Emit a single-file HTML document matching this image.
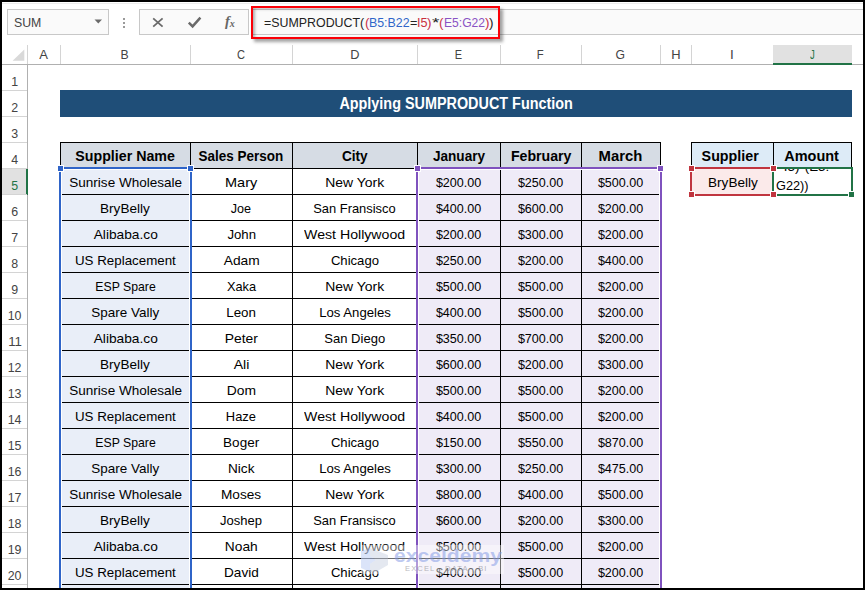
<!DOCTYPE html>
<html><head><meta charset="utf-8"><title>Excel</title>
<style>
html,body{margin:0;padding:0;}
html{width:865px;height:590px;overflow:hidden;}
body{width:865px;height:590px;position:relative;overflow:hidden;background:#fff;font-family:"Liberation Sans",sans-serif;}
.a{position:absolute;box-sizing:border-box;}
.t{position:absolute;white-space:nowrap;line-height:normal;display:block;}
</style></head><body>

<div class="a" style="left:2px;top:3px;width:861px;height:1px;background:#ececec;"></div>
<div class="a" style="left:7px;top:9px;width:102px;height:26px;border:1px solid #c8c8c8;background:#fafafa;"></div>
<span class="t" style="left:14.00px;top:16.00px;font-size:12.6px;font-weight:normal;color:#444;transform:scaleX(0.9780);transform-origin:left top;">SUM</span>
<svg class="a" style="left:94px;top:19px" width="9" height="6"><path d="M0.5 0.5 L8 0.5 L4.25 4.5 Z" fill="#6a6a6a"/></svg>
<div class="a" style="left:123px;top:18px;width:2px;height:2px;background:#9a9a9a;"></div>
<div class="a" style="left:123px;top:22px;width:2px;height:2px;background:#9a9a9a;"></div>
<div class="a" style="left:123px;top:26px;width:2px;height:2px;background:#9a9a9a;"></div>
<div class="a" style="left:139px;top:9px;width:110px;height:26px;border:1px solid #c8c8c8;background:#fafafa;"></div>
<svg class="a" style="left:151px;top:16px" width="14" height="14"><path d="M2.2 2.4 L11.6 10.6 M11.6 2.4 L2.2 10.6" stroke="#6a6a6a" stroke-width="1.8" fill="none"/></svg>
<svg class="a" style="left:187px;top:16px" width="16" height="14"><path d="M1.8 6.6 L5.6 10.4 L13.4 1.6" stroke="#6a6a6a" stroke-width="2.5" fill="none"/></svg>
<span class="t" style="left:225px;top:13px;font-family:'Liberation Serif',serif;font-style:italic;font-weight:bold;font-size:14.5px;color:#666;">f<span style="font-size:10px;position:relative;top:1px;">x</span></span>
<div class="a" style="left:252px;top:9px;width:611px;height:26px;border-top:1px solid #c8c8c8;border-bottom:1px solid #c8c8c8;background:#fafafa;"></div>
<div class="a" style="left:251px;top:6px;width:249px;height:32.5px;border:2.3px solid #fb0007;box-shadow:3px 3px 3px rgba(0,0,0,0.36), inset 2px 1px 3px rgba(0,0,0,0.3);"></div>
<span class="t" style="left:264.30px;top:15.00px;font-size:13px;font-weight:normal;color:#222;transform:scaleX(0.9535);transform-origin:left top;">=SUMPRODUCT(</span>
<span class="t" style="left:364.50px;top:15.00px;font-size:13px;font-weight:normal;color:#c9304a;transform:scaleX(1.0387);transform-origin:left top;">(</span>
<span class="t" style="left:368.99px;top:15.00px;font-size:13px;font-weight:normal;color:#2f66c9;transform:scaleX(0.9502);transform-origin:left top;">B5:B22</span>
<span class="t" style="left:409.51px;top:15.00px;font-size:13px;font-weight:normal;color:#222;transform:scaleX(0.9729);transform-origin:left top;">=</span>
<span class="t" style="left:416.90px;top:15.00px;font-size:13px;font-weight:normal;color:#c9303c;transform:scaleX(0.9724);transform-origin:left top;">I5</span>
<span class="t" style="left:427.44px;top:15.00px;font-size:13px;font-weight:normal;color:#c9304a;transform:scaleX(1.0387);transform-origin:left top;">)</span>
<span class="t" style="left:431.94px;top:15.00px;font-size:13px;font-weight:normal;color:#222;transform:scaleX(1.4600);transform-origin:left top;">*</span>
<span class="t" style="left:439.33px;top:15.00px;font-size:13px;font-weight:normal;color:#c9304a;transform:scaleX(1.0387);transform-origin:left top;">(</span>
<span class="t" style="left:443.82px;top:15.00px;font-size:13px;font-weight:normal;color:#8a52c4;transform:scaleX(0.9297);transform-origin:left top;">E5:G22</span>
<span class="t" style="left:484.81px;top:15.00px;font-size:13px;font-weight:normal;color:#c9304a;transform:scaleX(1.0387);transform-origin:left top;">)</span>
<span class="t" style="left:489.30px;top:15.00px;font-size:13px;font-weight:normal;color:#222;transform:scaleX(1.0387);transform-origin:left top;">)</span>
<div class="a" style="left:2px;top:64px;width:861px;height:1px;background:#b0b0b0;"></div>
<div class="a" style="left:27px;top:45px;width:1px;height:19px;background:#d4d4d4;"></div>
<div class="a" style="left:27px;top:64px;width:1px;height:526px;background:#b0b0b0;"></div>
<svg class="a" style="left:11px;top:48px" width="16" height="14"><path d="M13.3 1.5 L13.3 12.7 L1.6 12.7 Z" fill="#d9d9d9"/></svg>
<div class="a" style="left:60px;top:45px;width:1px;height:19px;background:#d4d4d4;"></div>
<span class="t" style="left:38.96px;top:47.00px;font-size:13.6px;font-weight:normal;color:#444;transform:scaleX(0.9568);transform-origin:center top;">A</span>
<div class="a" style="left:190px;top:45px;width:1px;height:19px;background:#d4d4d4;"></div>
<span class="t" style="left:120.46px;top:47.00px;font-size:13.6px;font-weight:normal;color:#444;transform:scaleX(0.8995);transform-origin:center top;">B</span>
<div class="a" style="left:292px;top:45px;width:1px;height:19px;background:#d4d4d4;"></div>
<span class="t" style="left:236.09px;top:47.00px;font-size:13.6px;font-weight:normal;color:#444;transform:scaleX(0.8143);transform-origin:center top;">C</span>
<div class="a" style="left:417px;top:45px;width:1px;height:19px;background:#d4d4d4;"></div>
<span class="t" style="left:349.59px;top:47.00px;font-size:13.6px;font-weight:normal;color:#444;transform:scaleX(0.9396);transform-origin:center top;">D</span>
<div class="a" style="left:500px;top:45px;width:1px;height:19px;background:#d4d4d4;"></div>
<span class="t" style="left:453.96px;top:47.00px;font-size:13.6px;font-weight:normal;color:#444;transform:scaleX(0.8074);transform-origin:center top;">E</span>
<div class="a" style="left:581px;top:45px;width:1px;height:19px;background:#d4d4d4;"></div>
<span class="t" style="left:536.35px;top:47.00px;font-size:13.6px;font-weight:normal;color:#444;transform:scaleX(0.8296);transform-origin:center top;">F</span>
<div class="a" style="left:660px;top:45px;width:1px;height:19px;background:#d4d4d4;"></div>
<span class="t" style="left:615.21px;top:47.00px;font-size:13.6px;font-weight:normal;color:#444;transform:scaleX(0.8945);transform-origin:center top;">G</span>
<div class="a" style="left:691px;top:45px;width:1px;height:19px;background:#d4d4d4;"></div>
<span class="t" style="left:670.59px;top:47.00px;font-size:13.6px;font-weight:normal;color:#444;transform:scaleX(0.9516);transform-origin:center top;">H</span>
<div class="a" style="left:773px;top:45px;width:1px;height:19px;background:#d4d4d4;"></div>
<span class="t" style="left:730.11px;top:47.00px;font-size:13.6px;font-weight:normal;color:#444;transform:scaleX(1.0002);transform-origin:center top;">I</span>
<div class="a" style="left:773px;top:45px;width:79px;height:19px;background:#e1e1e1;"></div>
<div class="a" style="left:773px;top:63px;width:79px;height:2px;background:#217346;"></div>
<span class="t" style="left:809.10px;top:47.00px;font-size:13.6px;font-weight:normal;color:#217346;transform:scaleX(0.7033);transform-origin:center top;">J</span>
<div class="a" style="left:2px;top:90px;width:25px;height:1px;background:#d4d4d4;"></div>
<span class="t" style="left:11.22px;top:74.00px;font-size:13.6px;font-weight:normal;color:#444;transform:scaleX(0.9102);transform-origin:center top;">1</span>
<div class="a" style="left:2px;top:116px;width:25px;height:1px;background:#d4d4d4;"></div>
<span class="t" style="left:11.22px;top:100.00px;font-size:13.6px;font-weight:normal;color:#444;transform:scaleX(0.9102);transform-origin:center top;">2</span>
<div class="a" style="left:2px;top:142px;width:25px;height:1px;background:#d4d4d4;"></div>
<span class="t" style="left:11.22px;top:126.00px;font-size:13.6px;font-weight:normal;color:#444;transform:scaleX(0.9102);transform-origin:center top;">3</span>
<div class="a" style="left:2px;top:168px;width:25px;height:1px;background:#d4d4d4;"></div>
<span class="t" style="left:11.22px;top:152.00px;font-size:13.6px;font-weight:normal;color:#444;transform:scaleX(0.9102);transform-origin:center top;">4</span>
<div class="a" style="left:2px;top:169px;width:25px;height:25px;background:#e1e1e1;"></div>
<div class="a" style="left:26px;top:169px;width:2px;height:26px;background:#217346;"></div>
<div class="a" style="left:2px;top:194px;width:25px;height:1px;background:#d4d4d4;"></div>
<span class="t" style="left:11.22px;top:178.00px;font-size:13.6px;font-weight:normal;color:#217346;transform:scaleX(0.9102);transform-origin:center top;">5</span>
<div class="a" style="left:2px;top:220px;width:25px;height:1px;background:#d4d4d4;"></div>
<span class="t" style="left:11.22px;top:204.00px;font-size:13.6px;font-weight:normal;color:#444;transform:scaleX(0.9102);transform-origin:center top;">6</span>
<div class="a" style="left:2px;top:246px;width:25px;height:1px;background:#d4d4d4;"></div>
<span class="t" style="left:11.22px;top:230.00px;font-size:13.6px;font-weight:normal;color:#444;transform:scaleX(0.9102);transform-origin:center top;">7</span>
<div class="a" style="left:2px;top:272px;width:25px;height:1px;background:#d4d4d4;"></div>
<span class="t" style="left:11.22px;top:256.00px;font-size:13.6px;font-weight:normal;color:#444;transform:scaleX(0.9102);transform-origin:center top;">8</span>
<div class="a" style="left:2px;top:298px;width:25px;height:1px;background:#d4d4d4;"></div>
<span class="t" style="left:11.22px;top:282.00px;font-size:13.6px;font-weight:normal;color:#444;transform:scaleX(0.9102);transform-origin:center top;">9</span>
<div class="a" style="left:2px;top:324px;width:25px;height:1px;background:#d4d4d4;"></div>
<span class="t" style="left:7.44px;top:308.00px;font-size:13.6px;font-weight:normal;color:#444;transform:scaleX(0.9102);transform-origin:center top;">10</span>
<div class="a" style="left:2px;top:350px;width:25px;height:1px;background:#d4d4d4;"></div>
<span class="t" style="left:7.94px;top:334.00px;font-size:13.6px;font-weight:normal;color:#444;transform:scaleX(0.9753);transform-origin:center top;">11</span>
<div class="a" style="left:2px;top:376px;width:25px;height:1px;background:#d4d4d4;"></div>
<span class="t" style="left:7.44px;top:360.00px;font-size:13.6px;font-weight:normal;color:#444;transform:scaleX(0.9102);transform-origin:center top;">12</span>
<div class="a" style="left:2px;top:402px;width:25px;height:1px;background:#d4d4d4;"></div>
<span class="t" style="left:7.44px;top:386.00px;font-size:13.6px;font-weight:normal;color:#444;transform:scaleX(0.9102);transform-origin:center top;">13</span>
<div class="a" style="left:2px;top:428px;width:25px;height:1px;background:#d4d4d4;"></div>
<span class="t" style="left:7.44px;top:412.00px;font-size:13.6px;font-weight:normal;color:#444;transform:scaleX(0.9102);transform-origin:center top;">14</span>
<div class="a" style="left:2px;top:454px;width:25px;height:1px;background:#d4d4d4;"></div>
<span class="t" style="left:7.44px;top:438.00px;font-size:13.6px;font-weight:normal;color:#444;transform:scaleX(0.9102);transform-origin:center top;">15</span>
<div class="a" style="left:2px;top:480px;width:25px;height:1px;background:#d4d4d4;"></div>
<span class="t" style="left:7.44px;top:464.00px;font-size:13.6px;font-weight:normal;color:#444;transform:scaleX(0.9102);transform-origin:center top;">16</span>
<div class="a" style="left:2px;top:506px;width:25px;height:1px;background:#d4d4d4;"></div>
<span class="t" style="left:7.44px;top:490.00px;font-size:13.6px;font-weight:normal;color:#444;transform:scaleX(0.9102);transform-origin:center top;">17</span>
<div class="a" style="left:2px;top:532px;width:25px;height:1px;background:#d4d4d4;"></div>
<span class="t" style="left:7.44px;top:516.00px;font-size:13.6px;font-weight:normal;color:#444;transform:scaleX(0.9102);transform-origin:center top;">18</span>
<div class="a" style="left:2px;top:558px;width:25px;height:1px;background:#d4d4d4;"></div>
<span class="t" style="left:7.44px;top:542.00px;font-size:13.6px;font-weight:normal;color:#444;transform:scaleX(0.9102);transform-origin:center top;">19</span>
<div class="a" style="left:2px;top:584px;width:25px;height:1px;background:#d4d4d4;"></div>
<span class="t" style="left:7.44px;top:568.00px;font-size:13.6px;font-weight:normal;color:#444;transform:scaleX(0.9102);transform-origin:center top;">20</span>
<div class="a" style="left:60px;top:90px;width:792px;height:27px;background:#1f4e78;"></div>
<span class="t" style="left:328.16px;top:95.00px;font-size:15.8px;font-weight:bold;color:#fff;transform:scaleX(0.9111);transform-origin:center top;">Applying SUMPRODUCT Function</span>
<div class="a" style="left:60px;top:142px;width:601px;height:27px;background:#d6dce4;"></div>
<div class="a" style="left:60px;top:169px;width:130px;height:419px;background:#e9eef8;"></div>
<div class="a" style="left:417px;top:169px;width:244px;height:419px;background:#efebf7;"></div>
<div class="a" style="left:60px;top:142px;width:601px;height:1px;background:#000;"></div>
<div class="a" style="left:60px;top:168px;width:601px;height:1px;background:#000;"></div>
<div class="a" style="left:60px;top:194px;width:601px;height:1px;background:#000;"></div>
<div class="a" style="left:60px;top:220px;width:601px;height:1px;background:#000;"></div>
<div class="a" style="left:60px;top:246px;width:601px;height:1px;background:#000;"></div>
<div class="a" style="left:60px;top:272px;width:601px;height:1px;background:#000;"></div>
<div class="a" style="left:60px;top:298px;width:601px;height:1px;background:#000;"></div>
<div class="a" style="left:60px;top:324px;width:601px;height:1px;background:#000;"></div>
<div class="a" style="left:60px;top:350px;width:601px;height:1px;background:#000;"></div>
<div class="a" style="left:60px;top:376px;width:601px;height:1px;background:#000;"></div>
<div class="a" style="left:60px;top:402px;width:601px;height:1px;background:#000;"></div>
<div class="a" style="left:60px;top:428px;width:601px;height:1px;background:#000;"></div>
<div class="a" style="left:60px;top:454px;width:601px;height:1px;background:#000;"></div>
<div class="a" style="left:60px;top:480px;width:601px;height:1px;background:#000;"></div>
<div class="a" style="left:60px;top:506px;width:601px;height:1px;background:#000;"></div>
<div class="a" style="left:60px;top:532px;width:601px;height:1px;background:#000;"></div>
<div class="a" style="left:60px;top:558px;width:601px;height:1px;background:#000;"></div>
<div class="a" style="left:60px;top:584px;width:601px;height:1px;background:#000;"></div>
<div class="a" style="left:60px;top:142px;width:1px;height:446px;background:#000;"></div>
<div class="a" style="left:190px;top:142px;width:1px;height:446px;background:#000;"></div>
<div class="a" style="left:292px;top:142px;width:1px;height:446px;background:#000;"></div>
<div class="a" style="left:417px;top:142px;width:1px;height:446px;background:#000;"></div>
<div class="a" style="left:500px;top:142px;width:1px;height:446px;background:#000;"></div>
<div class="a" style="left:581px;top:142px;width:1px;height:446px;background:#000;"></div>
<div class="a" style="left:660px;top:142px;width:1px;height:446px;background:#000;"></div>
<span class="t" style="left:74.19px;top:148.00px;font-size:14.6px;font-weight:bold;color:#000;transform:scaleX(0.9746);transform-origin:center top;">Supplier Name</span>
<span class="t" style="left:195.45px;top:148.00px;font-size:14.6px;font-weight:bold;color:#000;transform:scaleX(0.9235);transform-origin:center top;">Sales Person</span>
<span class="t" style="left:341.01px;top:148.00px;font-size:14.6px;font-weight:bold;color:#000;transform:scaleX(0.9353);transform-origin:center top;">City</span>
<span class="t" style="left:430.80px;top:148.00px;font-size:14.6px;font-weight:bold;color:#000;transform:scaleX(0.9298);transform-origin:center top;">January</span>
<span class="t" style="left:509.56px;top:148.00px;font-size:14.6px;font-weight:bold;color:#000;transform:scaleX(0.9686);transform-origin:center top;">February</span>
<span class="t" style="left:599.30px;top:148.00px;font-size:14.6px;font-weight:bold;color:#000;transform:scaleX(1.0180);transform-origin:center top;">March</span>
<span class="t" style="left:68.61px;top:175.00px;font-size:13.6px;font-weight:normal;color:#000;transform:scaleX(0.9947);transform-origin:center top;">Sunrise Wholesale</span>
<span class="t" style="left:226.19px;top:175.00px;font-size:13.6px;font-weight:normal;color:#000;transform:scaleX(1.0669);transform-origin:center top;">Mary</span>
<span class="t" style="left:326.07px;top:175.00px;font-size:13.6px;font-weight:normal;color:#000;transform:scaleX(1.0255);transform-origin:center top;">New York</span>
<span class="t" style="left:434.22px;top:175.00px;font-size:13.6px;font-weight:normal;color:#000;transform:scaleX(0.9234);transform-origin:center top;">$200.00</span>
<span class="t" style="left:516.22px;top:175.00px;font-size:13.6px;font-weight:normal;color:#000;transform:scaleX(0.9234);transform-origin:center top;">$250.00</span>
<span class="t" style="left:596.22px;top:175.00px;font-size:13.6px;font-weight:normal;color:#000;transform:scaleX(0.9234);transform-origin:center top;">$500.00</span>
<span class="t" style="left:100.36px;top:201.00px;font-size:13.6px;font-weight:normal;color:#000;transform:scaleX(0.9985);transform-origin:center top;">BryBelly</span>
<span class="t" style="left:230.34px;top:201.00px;font-size:13.6px;font-weight:normal;color:#000;transform:scaleX(0.9254);transform-origin:center top;">Joe</span>
<span class="t" style="left:311.34px;top:201.00px;font-size:13.6px;font-weight:normal;color:#000;transform:scaleX(0.9492);transform-origin:center top;">San Fransisco</span>
<span class="t" style="left:434.22px;top:201.00px;font-size:13.6px;font-weight:normal;color:#000;transform:scaleX(0.9234);transform-origin:center top;">$400.00</span>
<span class="t" style="left:516.22px;top:201.00px;font-size:13.6px;font-weight:normal;color:#000;transform:scaleX(0.9234);transform-origin:center top;">$600.00</span>
<span class="t" style="left:596.22px;top:201.00px;font-size:13.6px;font-weight:normal;color:#000;transform:scaleX(0.9234);transform-origin:center top;">$200.00</span>
<span class="t" style="left:93.54px;top:227.00px;font-size:13.6px;font-weight:normal;color:#000;transform:scaleX(1.0102);transform-origin:center top;">Alibaba.co</span>
<span class="t" style="left:226.55px;top:227.00px;font-size:13.6px;font-weight:normal;color:#000;transform:scaleX(0.9713);transform-origin:center top;">John</span>
<span class="t" style="left:306.17px;top:227.00px;font-size:13.6px;font-weight:normal;color:#000;transform:scaleX(1.0397);transform-origin:center top;">West Hollywood</span>
<span class="t" style="left:434.22px;top:227.00px;font-size:13.6px;font-weight:normal;color:#000;transform:scaleX(0.9234);transform-origin:center top;">$200.00</span>
<span class="t" style="left:516.22px;top:227.00px;font-size:13.6px;font-weight:normal;color:#000;transform:scaleX(0.9234);transform-origin:center top;">$300.00</span>
<span class="t" style="left:596.22px;top:227.00px;font-size:13.6px;font-weight:normal;color:#000;transform:scaleX(0.9234);transform-origin:center top;">$200.00</span>
<span class="t" style="left:73.90px;top:253.00px;font-size:13.6px;font-weight:normal;color:#000;transform:scaleX(0.9810);transform-origin:center top;">US Replacement</span>
<span class="t" style="left:223.54px;top:253.00px;font-size:13.6px;font-weight:normal;color:#000;transform:scaleX(1.0123);transform-origin:center top;">Adam</span>
<span class="t" style="left:329.85px;top:253.00px;font-size:13.6px;font-weight:normal;color:#000;transform:scaleX(0.9647);transform-origin:center top;">Chicago</span>
<span class="t" style="left:434.22px;top:253.00px;font-size:13.6px;font-weight:normal;color:#000;transform:scaleX(0.9234);transform-origin:center top;">$250.00</span>
<span class="t" style="left:516.22px;top:253.00px;font-size:13.6px;font-weight:normal;color:#000;transform:scaleX(0.9234);transform-origin:center top;">$200.00</span>
<span class="t" style="left:596.22px;top:253.00px;font-size:13.6px;font-weight:normal;color:#000;transform:scaleX(0.9234);transform-origin:center top;">$400.00</span>
<span class="t" style="left:91.78px;top:279.00px;font-size:13.6px;font-weight:normal;color:#000;transform:scaleX(0.9011);transform-origin:center top;">ESP Spare</span>
<span class="t" style="left:225.80px;top:279.00px;font-size:13.6px;font-weight:normal;color:#000;transform:scaleX(0.9409);transform-origin:center top;">Xaka</span>
<span class="t" style="left:326.07px;top:279.00px;font-size:13.6px;font-weight:normal;color:#000;transform:scaleX(1.0255);transform-origin:center top;">New York</span>
<span class="t" style="left:434.22px;top:279.00px;font-size:13.6px;font-weight:normal;color:#000;transform:scaleX(0.9234);transform-origin:center top;">$500.00</span>
<span class="t" style="left:516.22px;top:279.00px;font-size:13.6px;font-weight:normal;color:#000;transform:scaleX(0.9234);transform-origin:center top;">$500.00</span>
<span class="t" style="left:596.22px;top:279.00px;font-size:13.6px;font-weight:normal;color:#000;transform:scaleX(0.9234);transform-origin:center top;">$200.00</span>
<span class="t" style="left:91.03px;top:305.00px;font-size:13.6px;font-weight:normal;color:#000;transform:scaleX(0.9901);transform-origin:center top;">Spare Vally</span>
<span class="t" style="left:226.17px;top:305.00px;font-size:13.6px;font-weight:normal;color:#000;transform:scaleX(0.9836);transform-origin:center top;">Leon</span>
<span class="t" style="left:317.75px;top:305.00px;font-size:13.6px;font-weight:normal;color:#000;transform:scaleX(0.9690);transform-origin:center top;">Los Angeles</span>
<span class="t" style="left:434.22px;top:305.00px;font-size:13.6px;font-weight:normal;color:#000;transform:scaleX(0.9234);transform-origin:center top;">$400.00</span>
<span class="t" style="left:516.22px;top:305.00px;font-size:13.6px;font-weight:normal;color:#000;transform:scaleX(0.9234);transform-origin:center top;">$500.00</span>
<span class="t" style="left:596.22px;top:305.00px;font-size:13.6px;font-weight:normal;color:#000;transform:scaleX(0.9234);transform-origin:center top;">$200.00</span>
<span class="t" style="left:93.54px;top:331.00px;font-size:13.6px;font-weight:normal;color:#000;transform:scaleX(1.0102);transform-origin:center top;">Alibaba.co</span>
<span class="t" style="left:225.05px;top:331.00px;font-size:13.6px;font-weight:normal;color:#000;transform:scaleX(1.0198);transform-origin:center top;">Peter</span>
<span class="t" style="left:323.04px;top:331.00px;font-size:13.6px;font-weight:normal;color:#000;transform:scaleX(0.9582);transform-origin:center top;">San Diego</span>
<span class="t" style="left:434.22px;top:331.00px;font-size:13.6px;font-weight:normal;color:#000;transform:scaleX(0.9234);transform-origin:center top;">$350.00</span>
<span class="t" style="left:516.22px;top:331.00px;font-size:13.6px;font-weight:normal;color:#000;transform:scaleX(0.9234);transform-origin:center top;">$700.00</span>
<span class="t" style="left:596.22px;top:331.00px;font-size:13.6px;font-weight:normal;color:#000;transform:scaleX(0.9234);transform-origin:center top;">$200.00</span>
<span class="t" style="left:100.36px;top:357.00px;font-size:13.6px;font-weight:normal;color:#000;transform:scaleX(0.9985);transform-origin:center top;">BryBelly</span>
<span class="t" style="left:233.74px;top:357.00px;font-size:13.6px;font-weight:normal;color:#000;transform:scaleX(1.0366);transform-origin:center top;">Ali</span>
<span class="t" style="left:326.07px;top:357.00px;font-size:13.6px;font-weight:normal;color:#000;transform:scaleX(1.0255);transform-origin:center top;">New York</span>
<span class="t" style="left:434.22px;top:357.00px;font-size:13.6px;font-weight:normal;color:#000;transform:scaleX(0.9234);transform-origin:center top;">$600.00</span>
<span class="t" style="left:516.22px;top:357.00px;font-size:13.6px;font-weight:normal;color:#000;transform:scaleX(0.9234);transform-origin:center top;">$200.00</span>
<span class="t" style="left:596.22px;top:357.00px;font-size:13.6px;font-weight:normal;color:#000;transform:scaleX(0.9234);transform-origin:center top;">$300.00</span>
<span class="t" style="left:68.61px;top:383.00px;font-size:13.6px;font-weight:normal;color:#000;transform:scaleX(0.9947);transform-origin:center top;">Sunrise Wholesale</span>
<span class="t" style="left:226.94px;top:383.00px;font-size:13.6px;font-weight:normal;color:#000;transform:scaleX(1.0209);transform-origin:center top;">Dom</span>
<span class="t" style="left:326.07px;top:383.00px;font-size:13.6px;font-weight:normal;color:#000;transform:scaleX(1.0255);transform-origin:center top;">New York</span>
<span class="t" style="left:434.22px;top:383.00px;font-size:13.6px;font-weight:normal;color:#000;transform:scaleX(0.9234);transform-origin:center top;">$500.00</span>
<span class="t" style="left:516.22px;top:383.00px;font-size:13.6px;font-weight:normal;color:#000;transform:scaleX(0.9234);transform-origin:center top;">$500.00</span>
<span class="t" style="left:596.22px;top:383.00px;font-size:13.6px;font-weight:normal;color:#000;transform:scaleX(0.9234);transform-origin:center top;">$200.00</span>
<span class="t" style="left:73.90px;top:409.00px;font-size:13.6px;font-weight:normal;color:#000;transform:scaleX(0.9810);transform-origin:center top;">US Replacement</span>
<span class="t" style="left:225.43px;top:409.00px;font-size:13.6px;font-weight:normal;color:#000;transform:scaleX(0.9487);transform-origin:center top;">Haze</span>
<span class="t" style="left:306.17px;top:409.00px;font-size:13.6px;font-weight:normal;color:#000;transform:scaleX(1.0397);transform-origin:center top;">West Hollywood</span>
<span class="t" style="left:434.22px;top:409.00px;font-size:13.6px;font-weight:normal;color:#000;transform:scaleX(0.9234);transform-origin:center top;">$400.00</span>
<span class="t" style="left:516.22px;top:409.00px;font-size:13.6px;font-weight:normal;color:#000;transform:scaleX(0.9234);transform-origin:center top;">$500.00</span>
<span class="t" style="left:596.22px;top:409.00px;font-size:13.6px;font-weight:normal;color:#000;transform:scaleX(0.9234);transform-origin:center top;">$200.00</span>
<span class="t" style="left:91.78px;top:435.00px;font-size:13.6px;font-weight:normal;color:#000;transform:scaleX(0.9011);transform-origin:center top;">ESP Spare</span>
<span class="t" style="left:223.15px;top:435.00px;font-size:13.6px;font-weight:normal;color:#000;transform:scaleX(0.9937);transform-origin:center top;">Boger</span>
<span class="t" style="left:329.85px;top:435.00px;font-size:13.6px;font-weight:normal;color:#000;transform:scaleX(0.9647);transform-origin:center top;">Chicago</span>
<span class="t" style="left:434.22px;top:435.00px;font-size:13.6px;font-weight:normal;color:#000;transform:scaleX(0.9234);transform-origin:center top;">$150.00</span>
<span class="t" style="left:516.22px;top:435.00px;font-size:13.6px;font-weight:normal;color:#000;transform:scaleX(0.9234);transform-origin:center top;">$550.00</span>
<span class="t" style="left:596.22px;top:435.00px;font-size:13.6px;font-weight:normal;color:#000;transform:scaleX(0.9234);transform-origin:center top;">$870.00</span>
<span class="t" style="left:91.03px;top:461.00px;font-size:13.6px;font-weight:normal;color:#000;transform:scaleX(0.9901);transform-origin:center top;">Spare Vally</span>
<span class="t" style="left:228.08px;top:461.00px;font-size:13.6px;font-weight:normal;color:#000;transform:scaleX(1.0007);transform-origin:center top;">Nick</span>
<span class="t" style="left:317.75px;top:461.00px;font-size:13.6px;font-weight:normal;color:#000;transform:scaleX(0.9690);transform-origin:center top;">Los Angeles</span>
<span class="t" style="left:434.22px;top:461.00px;font-size:13.6px;font-weight:normal;color:#000;transform:scaleX(0.9234);transform-origin:center top;">$300.00</span>
<span class="t" style="left:516.22px;top:461.00px;font-size:13.6px;font-weight:normal;color:#000;transform:scaleX(0.9234);transform-origin:center top;">$250.00</span>
<span class="t" style="left:596.22px;top:461.00px;font-size:13.6px;font-weight:normal;color:#000;transform:scaleX(0.9234);transform-origin:center top;">$475.00</span>
<span class="t" style="left:68.61px;top:487.00px;font-size:13.6px;font-weight:normal;color:#000;transform:scaleX(0.9947);transform-origin:center top;">Sunrise Wholesale</span>
<span class="t" style="left:221.27px;top:487.00px;font-size:13.6px;font-weight:normal;color:#000;transform:scaleX(1.0035);transform-origin:center top;">Moses</span>
<span class="t" style="left:326.07px;top:487.00px;font-size:13.6px;font-weight:normal;color:#000;transform:scaleX(1.0255);transform-origin:center top;">New York</span>
<span class="t" style="left:434.22px;top:487.00px;font-size:13.6px;font-weight:normal;color:#000;transform:scaleX(0.9234);transform-origin:center top;">$800.00</span>
<span class="t" style="left:516.22px;top:487.00px;font-size:13.6px;font-weight:normal;color:#000;transform:scaleX(0.9234);transform-origin:center top;">$400.00</span>
<span class="t" style="left:596.22px;top:487.00px;font-size:13.6px;font-weight:normal;color:#000;transform:scaleX(0.9234);transform-origin:center top;">$500.00</span>
<span class="t" style="left:100.36px;top:513.00px;font-size:13.6px;font-weight:normal;color:#000;transform:scaleX(0.9985);transform-origin:center top;">BryBelly</span>
<span class="t" style="left:219.37px;top:513.00px;font-size:13.6px;font-weight:normal;color:#000;transform:scaleX(0.9591);transform-origin:center top;">Joshep</span>
<span class="t" style="left:311.34px;top:513.00px;font-size:13.6px;font-weight:normal;color:#000;transform:scaleX(0.9492);transform-origin:center top;">San Fransisco</span>
<span class="t" style="left:434.22px;top:513.00px;font-size:13.6px;font-weight:normal;color:#000;transform:scaleX(0.9234);transform-origin:center top;">$600.00</span>
<span class="t" style="left:516.22px;top:513.00px;font-size:13.6px;font-weight:normal;color:#000;transform:scaleX(0.9234);transform-origin:center top;">$200.00</span>
<span class="t" style="left:596.22px;top:513.00px;font-size:13.6px;font-weight:normal;color:#000;transform:scaleX(0.9234);transform-origin:center top;">$300.00</span>
<span class="t" style="left:93.54px;top:539.00px;font-size:13.6px;font-weight:normal;color:#000;transform:scaleX(1.0102);transform-origin:center top;">Alibaba.co</span>
<span class="t" style="left:225.04px;top:539.00px;font-size:13.6px;font-weight:normal;color:#000;transform:scaleX(1.0112);transform-origin:center top;">Noah</span>
<span class="t" style="left:306.17px;top:539.00px;font-size:13.6px;font-weight:normal;color:#000;transform:scaleX(1.0397);transform-origin:center top;">West Hollywood</span>
<span class="t" style="left:434.22px;top:539.00px;font-size:13.6px;font-weight:normal;color:#000;transform:scaleX(0.9234);transform-origin:center top;">$500.00</span>
<span class="t" style="left:516.22px;top:539.00px;font-size:13.6px;font-weight:normal;color:#000;transform:scaleX(0.9234);transform-origin:center top;">$500.00</span>
<span class="t" style="left:596.22px;top:539.00px;font-size:13.6px;font-weight:normal;color:#000;transform:scaleX(0.9234);transform-origin:center top;">$200.00</span>
<span class="t" style="left:73.90px;top:565.00px;font-size:13.6px;font-weight:normal;color:#000;transform:scaleX(0.9810);transform-origin:center top;">US Replacement</span>
<span class="t" style="left:223.91px;top:565.00px;font-size:13.6px;font-weight:normal;color:#000;transform:scaleX(0.9992);transform-origin:center top;">David</span>
<span class="t" style="left:329.85px;top:565.00px;font-size:13.6px;font-weight:normal;color:#000;transform:scaleX(0.9647);transform-origin:center top;">Chicago</span>
<span class="t" style="left:434.22px;top:565.00px;font-size:13.6px;font-weight:normal;color:#000;transform:scaleX(0.9234);transform-origin:center top;">$400.00</span>
<span class="t" style="left:516.22px;top:565.00px;font-size:13.6px;font-weight:normal;color:#000;transform:scaleX(0.9234);transform-origin:center top;">$500.00</span>
<span class="t" style="left:596.22px;top:565.00px;font-size:13.6px;font-weight:normal;color:#000;transform:scaleX(0.9234);transform-origin:center top;">$200.00</span>
<div class="a" style="left:61px;top:169px;width:1px;height:419px;background:#fff;"></div>
<div class="a" style="left:189px;top:169px;width:1px;height:419px;background:#fff;"></div>
<div class="a" style="left:418px;top:169px;width:1px;height:419px;background:#fff;"></div>
<div class="a" style="left:659px;top:169px;width:1px;height:419px;background:#fff;"></div>
<div class="a" style="left:61px;top:169px;width:129px;height:1px;background:#fff;"></div>
<div class="a" style="left:418px;top:169px;width:242px;height:1px;background:#fff;"></div>
<div class="a" style="left:59px;top:167px;width:133px;height:423px;border:2px solid #2f64c8;border-bottom:none;"></div>
<div class="a" style="left:58px;top:166px;width:5px;height:5px;background:#2f64c8;box-shadow:0 0 0 1px #fff;"></div>
<div class="a" style="left:188px;top:166px;width:5px;height:5px;background:#2f64c8;box-shadow:0 0 0 1px #fff;"></div>
<div class="a" style="left:416px;top:167px;width:246px;height:423px;border:2px solid #7f52be;border-bottom:none;"></div>
<div class="a" style="left:415px;top:166px;width:5px;height:5px;background:#7f52be;box-shadow:0 0 0 1px #fff;"></div>
<div class="a" style="left:658px;top:166px;width:5px;height:5px;background:#7f52be;box-shadow:0 0 0 1px #fff;"></div>
<div class="a" style="left:691px;top:142px;width:161px;height:27px;background:#ddebf7;border:1px solid #000;"></div>
<div class="a" style="left:773px;top:142px;width:1px;height:27px;background:#000;"></div>
<span class="t" style="left:701.20px;top:148.00px;font-size:14.6px;font-weight:bold;color:#000;transform:scaleX(0.9793);transform-origin:center top;">Supplier</span>
<span class="t" style="left:784.43px;top:148.00px;font-size:14.6px;font-weight:bold;color:#000;transform:scaleX(0.9930);transform-origin:center top;">Amount</span>
<div class="a" style="left:690px;top:167px;width:85px;height:29px;background:#fbeaea;border:2px solid #c0353f;"></div>
<span class="t" style="left:707.56px;top:175.00px;font-size:13.6px;font-weight:normal;color:#000;transform:scaleX(0.9985);transform-origin:center top;">BryBelly</span>
<div class="a" style="left:772px;top:167px;width:81px;height:29px;background:#fff;border:2px solid #217346;"></div>
<div class="a" style="left:689px;top:166px;width:5px;height:5px;background:#c0353f;box-shadow:0 0 0 1px #fff;"></div>
<div class="a" style="left:771px;top:166px;width:5px;height:5px;background:#c0353f;box-shadow:0 0 0 1px #fff;"></div>
<div class="a" style="left:689px;top:192px;width:5px;height:5px;background:#c0353f;box-shadow:0 0 0 1px #fff;"></div>
<div class="a" style="left:771px;top:192px;width:5px;height:5px;background:#c0353f;box-shadow:0 0 0 1px #fff;"></div>
<div class="a" style="left:849px;top:192px;width:5px;height:5px;background:#217346;box-shadow:0 0 0 1px #fff;"></div>
<div class="a" style="left:774px;top:169px;width:77px;height:25px;overflow:hidden;">
<span class="t" style="left:2.40px;top:-10.50px;font-size:13.6px;font-weight:normal;color:#000;transform:scaleX(0.9857);transform-origin:left top;">=I5)*(E5:</span>
<span class="t" style="left:2.40px;top:8.50px;font-size:13.6px;font-weight:normal;color:#000;transform:scaleX(0.9362);transform-origin:left top;">G22))</span>
</div>
<div class="a" style="left:361px;top:545px;width:143px;height:29px;background:rgba(255,255,255,0.42);"></div>
<svg class="a" style="left:360px;top:547px" width="30" height="26" viewBox="0 0 30 26"><path d="M1 4 L10 1 L10 9 L16 13 L10 17 L10 25 L1 21 Z" fill="rgba(160,185,240,0.38)"/><path d="M10 1 L28 8 L28 18 L16 25 L10 25 L10 17 L16 13 L10 9 Z" fill="rgba(185,195,215,0.38)"/></svg>
<span class="t" style="left:394.20px;top:545.00px;font-size:18.9px;font-weight:bold;color:rgba(125,150,228,0.5);transform:scaleX(1.1172);transform-origin:left top;">exceldemy</span>
<span class="t" style="left:405.00px;top:565.00px;font-size:7px;font-weight:normal;color:rgba(110,110,120,0.5);transform:scaleX(1.0856);transform-origin:left top;letter-spacing:1px;">EXCEL · DATA · BI</span>
<div class="a" style="left:0px;top:0px;width:865px;height:590px;border:2px solid #000;"></div>
</body></html>
